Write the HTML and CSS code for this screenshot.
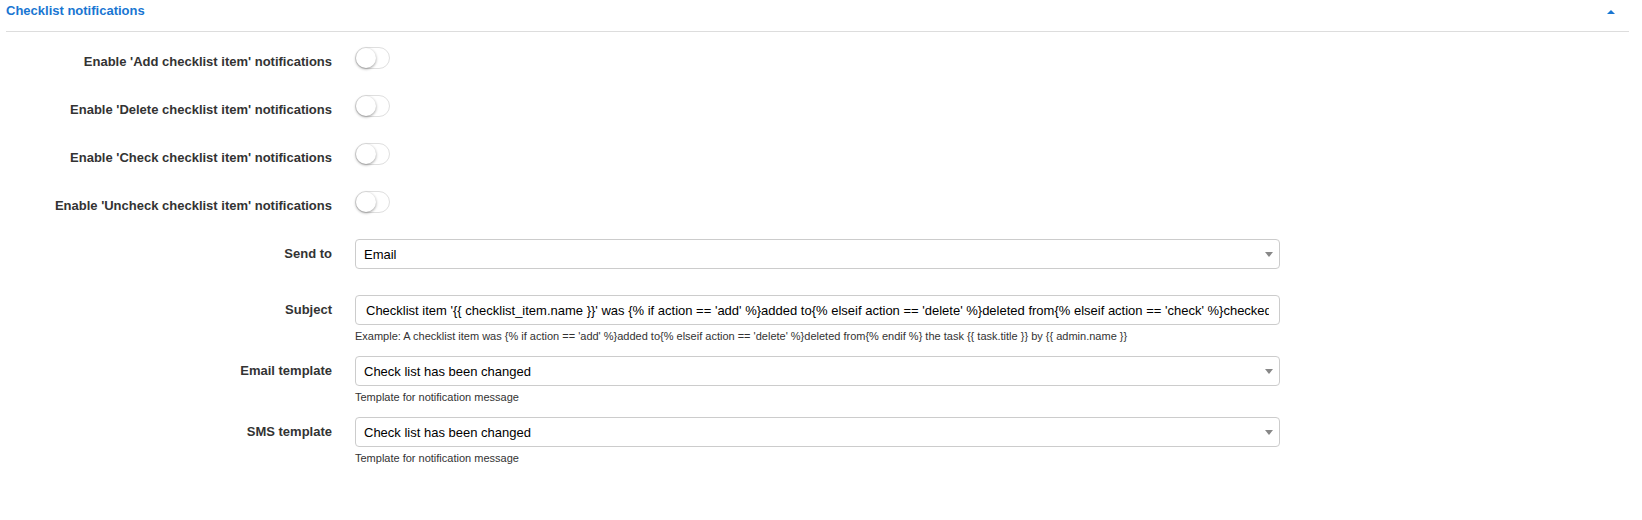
FILE: index.html
```html
<!DOCTYPE html>
<html lang="en">
<head>
<meta charset="utf-8">
<title>Checklist notifications</title>
<link rel="stylesheet" href="styles.css">
</head>
<body>
<section class="panel">
  <header class="panel-header">
    <h2 class="panel-title">Checklist notifications</h2>
    <button class="collapse" type="button" aria-label="Collapse section">
      <svg width="8" height="4" viewBox="0 0 8 4" aria-hidden="true"><path d="M4 0L8 4H0Z" fill="currentColor"/></svg>
    </button>
  </header>
  <form class="form">
    <div class="row">
      <label class="label" for="add">Enable 'Add checklist item' notifications</label>
      <div class="field"><input class="switch" type="checkbox" id="add"></div>
    </div>
    <div class="row">
      <label class="label" for="delete">Enable 'Delete checklist item' notifications</label>
      <div class="field"><input class="switch" type="checkbox" id="delete"></div>
    </div>
    <div class="row">
      <label class="label" for="check">Enable 'Check checklist item' notifications</label>
      <div class="field"><input class="switch" type="checkbox" id="check"></div>
    </div>
    <div class="row">
      <label class="label" for="uncheck">Enable 'Uncheck checklist item' notifications</label>
      <div class="field"><input class="switch" type="checkbox" id="uncheck"></div>
    </div>
    <div class="row row-send">
      <label class="label" for="send">Send to</label>
      <div class="field">
        <div class="select-wrap">
          <select class="control select" id="send"><option>Email</option></select>
          <svg class="caret" width="8" height="5" viewBox="0 0 8 5" aria-hidden="true"><path d="M0 0H8L4 5Z" fill="currentColor"/></svg>
        </div>
      </div>
    </div>
    <div class="row row-help">
      <label class="label" for="subject">Subject</label>
      <div class="field">
        <input class="control input" type="text" id="subject" value="Checklist item '{{ checklist_item.name }}' was {% if action == 'add' %}added to{% elseif action == 'delete' %}deleted from{% elseif action == 'check' %}checked{% endif %}">
        <p class="help">Example: A checklist item was {% if action == 'add' %}added to{% elseif action == 'delete' %}deleted from{% endif %} the task {{ task.title }} by {{ admin.name }}</p>
      </div>
    </div>
    <div class="row row-help">
      <label class="label" for="email">Email template</label>
      <div class="field">
        <div class="select-wrap">
          <select class="control select" id="email"><option>Check list has been changed</option></select>
          <svg class="caret" width="8" height="5" viewBox="0 0 8 5" aria-hidden="true"><path d="M0 0H8L4 5Z" fill="currentColor"/></svg>
        </div>
        <p class="help">Template for notification message</p>
      </div>
    </div>
    <div class="row row-help">
      <label class="label" for="sms">SMS template</label>
      <div class="field">
        <div class="select-wrap">
          <select class="control select" id="sms"><option>Check list has been changed</option></select>
          <svg class="caret" width="8" height="5" viewBox="0 0 8 5" aria-hidden="true"><path d="M0 0H8L4 5Z" fill="currentColor"/></svg>
        </div>
        <p class="help">Template for notification message</p>
      </div>
    </div>
  </form>
</section>
</body>
</html>
```
FILE: styles.css
```css
* {
  box-sizing: border-box;
}

body {
  margin: 0;
  background: #fff;
  color: #333;
  font-family: "Liberation Sans", Arial, sans-serif;
  font-size: 13px;
}

.panel {
  margin: 0 13px 0 6px;
}

.panel-header {
  display: flex;
  align-items: flex-start;
  justify-content: space-between;
  height: 32px;
  padding-right: 14px;
  border-bottom: 1px solid #ddd;
  color: #1976d2;
}

.panel-title {
  margin: 0;
  font-size: 13px;
  line-height: 22px;
}

.collapse {
  display: flex;
  padding: 10px 0 0;
  border: 0;
  background: none;
  color: inherit;
}

.form {
  padding-top: 15px;
}

.row {
  display: grid;
  grid-template-columns: minmax(0, 326px) 57%;
  column-gap: 23px;
  align-items: start;
  min-height: 48px;
}

.row-send {
  min-height: 56px;
}

.row-help {
  min-height: 61px;
}

.label {
  font-weight: bold;
  line-height: 30px;
  text-align: right;
}

.switch {
  appearance: none;
  display: block;
  width: 35px;
  height: 22px;
  margin: 0;
  border: 1px solid #dfdfdf;
  border-radius: 11px;
  background: #fff;
}

.switch::before {
  content: "";
  display: block;
  width: 20px;
  height: 20px;
  border-radius: 50%;
  background: #fff;
  box-shadow: 0 1px 3px rgba(0, 0, 0, 0.4);
}

.switch:checked {
  background: #1976d2;
}

.switch:checked::before {
  margin-left: 13px;
}

.control {
  display: block;
  width: 100%;
  height: 30px;
  border: 1px solid #ccc;
  border-radius: 4px;
  background: #fff;
  color: #000;
  font-family: inherit;
  font-size: 13px;
}

.input {
  padding: 0 10px;
}

.select {
  appearance: none;
  padding: 0 24px 0 8px;
}

.select-wrap {
  position: relative;
}

.caret {
  position: absolute;
  top: 13px;
  right: 7px;
  color: #888;
  pointer-events: none;
}

.help {
  margin: 3px 0 0;
  font-size: 11px;
  line-height: 16px;
}
```
